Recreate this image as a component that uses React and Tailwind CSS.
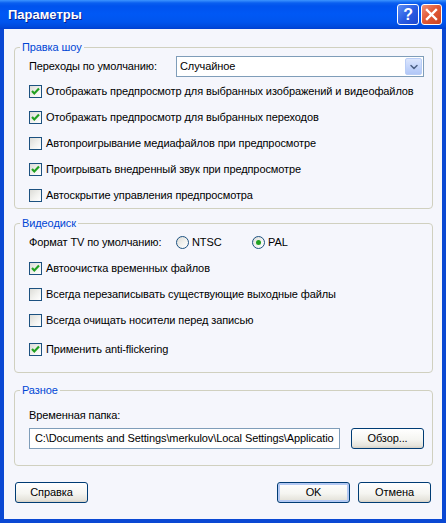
import { ChevronDown } from 'lucide-react'

const font = "font-['Liberation_Sans',Arial,sans-serif]"

function Check({ checked }) {
  return (
    <span className="w-[13px] h-[13px] shrink-0 border border-[#1c5180] bg-[linear-gradient(135deg,#dcdcd7_0%,#f2f2ef_55%,#ffffff_100%)] flex items-center justify-center">
      {checked && (
        <svg width="11" height="11" viewBox="0 0 11 11">
          <path d="M2 5 L4.3 7.4 L9 2.6" fill="none" stroke="#21a121" strokeWidth="2.2" />
        </svg>
      )}
    </span>
  )
}

function CheckRow({ checked, label, className = '' }) {
  return (
    <div className={`h-[26px] flex items-center gap-[4px] ${className}`}>
      <Check checked={checked} />
      <span className="whitespace-nowrap">{label}</span>
    </div>
  )
}

function Radio({ checked, label, className = '' }) {
  return (
    <div className={`flex items-center gap-[3px] ${className}`}>
      <span className="w-[13px] h-[13px] shrink-0 rounded-full border border-[#1c5180] bg-[linear-gradient(135deg,#dcdcd7_0%,#f2f2ef_55%,#ffffff_100%)] flex items-center justify-center">
        {checked && <span className="w-[5px] h-[5px] rounded-full bg-[#21a121]" />}
      </span>
      <span>{label}</span>
    </div>
  )
}

function Button({ children, className = '', isDefault }) {
  return (
    <button
      className={`h-[21px] w-[73px] shrink-0 rounded-[3px] border border-[#003c74] bg-[linear-gradient(180deg,#ffffff_0%,#f5f5f1_55%,#e6e4dc_88%,#d6d0c5_100%)] text-black flex items-center justify-center ${
        isDefault ? 'shadow-[inset_0_0_0_2px_#b4c9f3]' : ''
      } ${className}`}
    >
      {children}
    </button>
  )
}

function Group({ title, children, className = '' }) {
  return (
    <fieldset className={`min-w-0 border border-[#d0d0bf] rounded-[4px] ${className}`}>
      <legend className="ml-[5px] px-[2px] leading-[14px] text-[#0046d5]">{title}</legend>
      <div className="px-[14px]">{children}</div>
    </fieldset>
  )
}

export default function App() {
  return (
    <div className={`w-[446px] h-[523px] flex flex-col text-[11px] tracking-[-0.1px] text-black ${font}`}>
      {/* Title bar */}
      <div className="h-[29px] shrink-0 flex items-center pl-[8px] pr-[4px] bg-[linear-gradient(180deg,#3d95ff_0px,#0a5ff0_3px,#0053ee_6px,#0058f5_14px,#0055ee_22px,#0049dc_27px,#003fd0_29px)]">
        <span className="flex-1 text-white font-bold text-[13px] tracking-normal [text-shadow:1px_1px_0_#0a1e8c]">Параметры</span>
        <div className="flex gap-[2px]">
          <div className="w-[22px] h-[21px] rounded-[3px] border border-white bg-[linear-gradient(135deg,#5d8ff5_0%,#2a5de3_50%,#1c48d0_100%)] flex items-center justify-center text-white font-bold text-[16px] leading-none">
            ?
          </div>
          <div className="w-[21px] h-[21px] rounded-[3px] border border-white bg-[linear-gradient(135deg,#f0917a_0%,#e25a37_45%,#cc4421_100%)] flex items-center justify-center">
            <svg width="13" height="13" viewBox="0 0 13 13">
              <path d="M2 2 L11 11 M11 2 L2 11" stroke="white" strokeWidth="2.4" strokeLinecap="square" />
            </svg>
          </div>
        </div>
      </div>

      {/* Body */}
      <div className="flex-1 min-h-0 flex flex-col bg-[#f5f6fc] border-x-[4px] border-b-[4px] border-[#0a48d3] pl-[10px] pr-[9px]">
        <Group title="Правка шоу" className="mt-[11px]">
          <div className="pt-[1px]">
            <div className="h-[23px] flex items-center">
              <span className="w-[147px] shrink-0">Переходы по умолчанию:</span>
              <div className="flex-1 mr-[-6px] h-[21px] border border-[#7f9db9] bg-white flex items-center pl-[3px] pr-[1px]">
                <span className="flex-1">Случайное</span>
                <span className="w-[17px] h-[17px] rounded-[2px] border border-[#b9cdf6] bg-[linear-gradient(180deg,#dce6fd_0%,#c1d3fb_60%,#b2c7f7_100%)] flex items-center justify-center text-[#4d6185]">
                  <ChevronDown size={12} strokeWidth={3} />
                </span>
              </div>
            </div>
            <CheckRow checked label="Отображать предпросмотр для выбранных изображений и видеофайлов" />
            <CheckRow checked label="Отображать предпросмотр для выбранных переходов" />
            <CheckRow label="Автопроигрывание медиафайлов при предпросмотре" />
            <CheckRow checked label="Проигрывать внедренный звук при предпросмотре" />
            <CheckRow label="Автоскрытие управления предпросмотра" />
          </div>
        </Group>

        <Group title="Видеодиск" className="mt-[7px]">
          <div className="pb-[10px]">
            <div className="h-[25px] flex items-center">
              <span className="w-[147px] shrink-0">Формат TV по умолчанию:</span>
              <Radio label="NTSC" className="w-[76px]" />
              <Radio checked label="PAL" />
            </div>
            <CheckRow checked label="Автоочистка временных файлов" />
            <CheckRow label="Всегда перезаписывать существующие выходные файлы" />
            <CheckRow label="Всегда очищать носители перед записью" />
            <CheckRow checked label="Применить anti-flickering" className="mt-[3px]" />
          </div>
        </Group>

        <Group title="Разное" className="mt-[10px]">
          <div className="pt-[10px] pb-[16px]">
            <div className="h-[16px] flex items-center">Временная папка:</div>
            <div className="mt-[5px] flex items-center">
              <div className="w-[311px] shrink-0 h-[21px] border border-[#7f9db9] bg-white flex items-center pl-[5px] overflow-hidden whitespace-nowrap">
                C:\Documents and Settings\merkulov\Local Settings\Applicatio
              </div>
              <Button className="ml-[11px]">Обзор...</Button>
            </div>
          </div>
        </Group>

        <div className="mt-[16px] flex items-center">
          <Button className="ml-[1px]">Справка</Button>
          <div className="flex-1" />
          <Button isDefault>OK</Button>
          <Button className="ml-[8px] mr-[2px]">Отмена</Button>
        </div>
      </div>
    </div>
  )
}
